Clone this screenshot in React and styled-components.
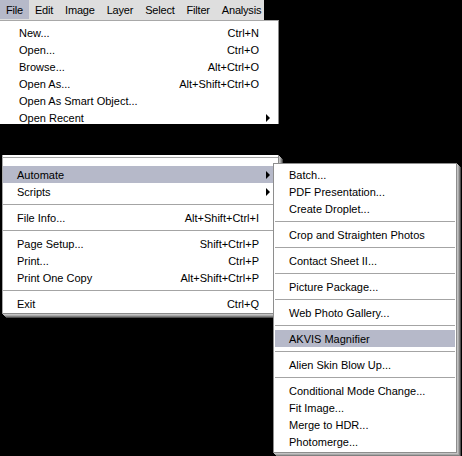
import React from 'react';
import styled, { createGlobalStyle } from 'styled-components';

const Global = createGlobalStyle`
  html, body { margin: 0; padding: 0; background: #000; }
  body { font-family: "Liberation Sans", Arial, sans-serif; }
`;

const Screen = styled.div`
  width: 462px;
  height: 456px;
  background: #000;
  overflow: hidden;
  display: flex;
  flex-direction: column;
  align-items: flex-start;
  font: 11px "Liberation Sans", Arial, sans-serif;
  color: #000;
`;

const MenuBar = styled.div`
  display: flex;
  width: 264px;
  height: 20px;
  background: #dedede;
  overflow: hidden;
  flex: none;
`;

const BarItem = styled.div`
  height: 19px;
  padding: 0 6px;
  display: flex;
  align-items: center;
  white-space: nowrap;
  letter-spacing: -0.2px;
  background: ${p => (p.$active ? '#b6b9c9' : 'transparent')};
`;

const TopMenu = styled.div`
  flex: none;
  width: 278px;
  height: 100px;
  padding-top: 3px;
  background: #fff;
  border-top: 1px solid #a8a8a8;
  border-right: 1px solid #8a8a8a;
  overflow: hidden;
`;

const LowerArea = styled.div`
  position: relative;
  margin-top: 31px;
  margin-left: 2px;
  flex: none;
`;

const LowerMenu = styled.div`
  width: 275px;
  padding-bottom: 1px;
  background: #fff;
  border-left: 1px solid #a8a8a8;
  border-right: 1px solid #8a8a8a;
  border-bottom: 1px solid #8a8a8a;
  box-shadow: 1px 1px 0 #c4c4c4, 2px 2px 0 #a8a8a8, 3px 3px 0 #808080, 4px 4px 0 #4e4e4e;
`;

const SubMenu = styled.div`
  position: absolute;
  left: 271px;
  top: 8px;
  width: 180px;
  padding: 2px 1px;
  background: #fff;
  border: 1px solid #8e8e8e;
  box-shadow: 1px 1px 0 #c4c4c4, 2px 2px 0 #a8a8a8, 3px 3px 0 #808080, 4px 4px 0 #4e4e4e;
`;

const Row = styled.div`
  height: 17px;
  display: flex;
  align-items: center;
  padding-left: ${p => p.$indent}px;
  white-space: nowrap;
  background: ${p => (p.$active ? '#b6b9c9' : 'transparent')};
`;

const Label = styled.span`
  flex: 1;
`;

const Shortcut = styled.span`
  text-align: right;
`;

const Trail = styled.span`
  flex: none;
  width: ${p => p.$w}px;
  height: 17px;
  display: flex;
  align-items: center;
`;

const Arrow = styled.span`
  margin-left: 7px;
  width: 0;
  height: 0;
  border-left: 4px solid #000;
  border-top: 4px solid transparent;
  border-bottom: 4px solid transparent;
`;

const Separator = styled.div`
  height: ${p => (p.$lead ? 11 : 9)}px;
  padding-top: ${p => (p.$lead ? 2 : 4)}px;
  box-sizing: border-box;
  &::after {
    content: '';
    display: block;
    height: 1px;
    margin: 0 ${p => p.$inset || 0}px;
    background: #a4a4a4;
  }
`;

const barItems = ['File', 'Edit', 'Image', 'Layer', 'Select', 'Filter', 'Analysis'];

const topItems = [
  { label: 'New...', sc: 'Ctrl+N' },
  { label: 'Open...', sc: 'Ctrl+O' },
  { label: 'Browse...', sc: 'Alt+Ctrl+O' },
  { label: 'Open As...', sc: 'Alt+Shift+Ctrl+O' },
  { label: 'Open As Smart Object...' },
  { label: 'Open Recent', sub: true },
];

const lowerItems = [
  { label: 'Automate', sub: true, active: true },
  { label: 'Scripts', sub: true },
  'sep',
  { label: 'File Info...', sc: 'Alt+Shift+Ctrl+I' },
  'sep',
  { label: 'Page Setup...', sc: 'Shift+Ctrl+P' },
  { label: 'Print...', sc: 'Ctrl+P' },
  { label: 'Print One Copy', sc: 'Alt+Shift+Ctrl+P' },
  'sep',
  { label: 'Exit', sc: 'Ctrl+Q' },
];

const subItems = [
  { label: 'Batch...' },
  { label: 'PDF Presentation...' },
  { label: 'Create Droplet...' },
  'sep',
  { label: 'Crop and Straighten Photos' },
  'sep',
  { label: 'Contact Sheet II...' },
  'sep',
  { label: 'Picture Package...' },
  'sep',
  { label: 'Web Photo Gallery...' },
  'sep',
  { label: 'AKVIS Magnifier', active: true },
  'sep',
  { label: 'Alien Skin Blow Up...' },
  'sep',
  { label: 'Conditional Mode Change...' },
  { label: 'Fit Image...' },
  { label: 'Merge to HDR...' },
  { label: 'Photomerge...' },
];

function Items({ items, indent, trail, inset }) {
  return items.map((it, i) =>
    it === 'sep' ? (
      <Separator key={i} $inset={inset} />
    ) : (
      <Row key={i} $indent={indent} $active={it.active}>
        <Label>{it.label}</Label>
        {it.sc && <Shortcut>{it.sc}</Shortcut>}
        {trail > 0 && <Trail $w={trail}>{it.sub && <Arrow />}</Trail>}
      </Row>
    )
  );
}

export default function App() {
  return (
    <>
      <Global />
      <Screen>
        <MenuBar>
          {barItems.map((b, i) => (
            <BarItem key={b} $active={i === 0}>{b}</BarItem>
          ))}
        </MenuBar>
        <TopMenu>
          <Items items={topItems} indent={19} trail={19} />
        </TopMenu>
        <LowerArea>
          <LowerMenu>
            <Separator $lead />
            <Items items={lowerItems} indent={14} trail={19} />
          </LowerMenu>
          <SubMenu>
            <Items items={subItems} indent={14} trail={0} inset={0} />
          </SubMenu>
        </LowerArea>
      </Screen>
    </>
  );
}
